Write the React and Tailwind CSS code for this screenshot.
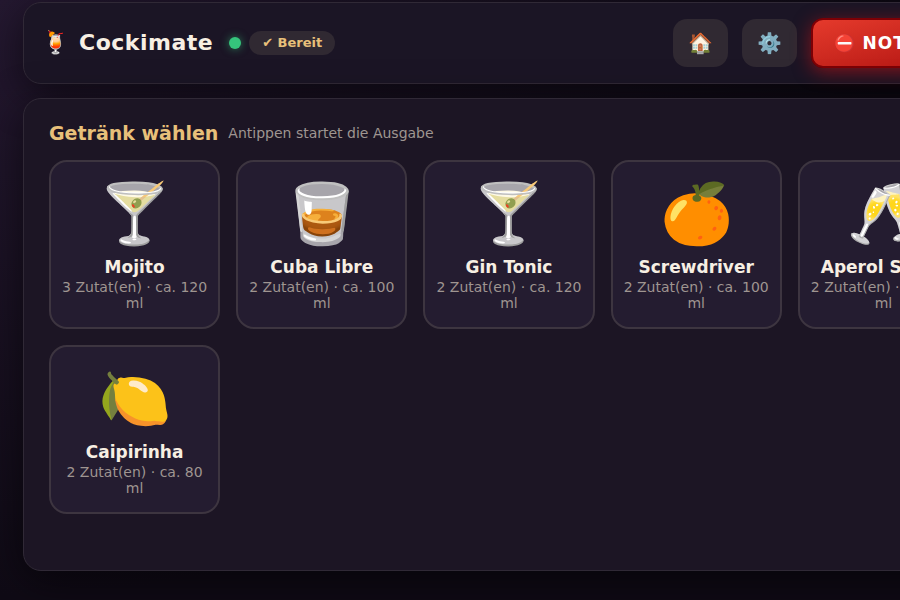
import { useState } from "react";

const drinks = [
  { id: 1, name: "Mojito", icon: "🍸", parts: 3, ml: 120 },
  { id: 2, name: "Cuba Libre", icon: "🥃", parts: 2, ml: 100 },
  { id: 3, name: "Gin Tonic", icon: "🍸", parts: 2, ml: 120 },
  { id: 4, name: "Screwdriver", icon: "🍊", parts: 2, ml: 100 },
  { id: 5, name: "Aperol Spritz", icon: "🥂", parts: 2, ml: 120 },
  { id: 6, name: "Caipirinha", icon: "🍋", parts: 2, ml: 80 },
];

function IconButton({ label, children }) {
  return (
    <button type="button" aria-label={label}
      className="flex h-12 w-[55px] items-center justify-center rounded-[14px] bg-[#302932] text-[20px] leading-6">
      {children}
    </button>
  );
}

function DrinkCard({ drink, onSelect }) {
  return (
    <button type="button" onClick={() => onSelect(drink.id)}
      className="flex min-h-[169px] flex-col items-center justify-center rounded-[18px] border-2 border-[#3d3540] bg-[#241c30] px-2.5 py-3 text-center">
      <span className="text-[59px] leading-[70px]">{drink.icon}</span>
      <span className="mt-2 text-[17px] font-bold leading-5 text-[#f7efe3]">{drink.name}</span>
      <span className="mt-0.5 text-[14px] leading-4 text-[#9f9591]">
        {drink.parts} Zutat(en) · ca. {drink.ml} ml
      </span>
    </button>
  );
}

export default function App() {
  const [, setSelected] = useState(null);

  return (
    <div className="min-h-screen overflow-x-hidden bg-[#0f0a15] bg-[radial-gradient(ellipse_at_top_left,#241830_0%,#0f0a15_70%)] font-['DejaVu_Sans',sans-serif] text-[#f7efe3]">
      <div className="flex min-h-screen min-w-[1018px] flex-col gap-3.5 px-[23px] pt-0.5 pb-[29px]">
        {/* Header */}
        <header className="flex items-center justify-between rounded-[18px] border border-[#302936] bg-[#1b1525] px-[18px] py-[15px] shadow-[0_10px_40px_rgba(0,0,0,0.55)]">
          <div className="flex items-center">
            <span className="text-[22px] leading-8">🍹</span>
            <h1 className="ml-2.5 text-[22px] font-bold leading-8 tracking-[0.5px]">Cockimate</h1>
            <span className="ml-4 size-3 rounded-full bg-[#35c47c] shadow-[0_0_8px_rgba(53,196,124,0.6)]" />
            <span className="ml-2 rounded-full bg-[#302932] px-[13px] py-1 text-[13px] font-bold leading-4 text-[#e8c07a]">
              ✔ Bereit
            </span>
          </div>
          <div className="flex items-center gap-3.5">
            <IconButton label="Startseite">🏠</IconButton>
            <IconButton label="Einstellungen">⚙️</IconButton>
            <button type="button"
              className="h-[50px] whitespace-nowrap rounded-xl border-2 border-[#7d0005] bg-linear-to-br from-[#e53a2c] to-[#b01010] px-[21px] text-[17px] font-bold leading-6 tracking-[1px] text-white shadow-[0_4px_18px_rgba(229,20,20,0.5)]">
              ⛔ NOT-AUS
            </button>
          </div>
        </header>

        {/* Drinks */}
        <main className="flex-1 rounded-[18px] border border-[#302936] bg-[#1c1524] px-[25px] pt-[22px] pb-6 shadow-[0_10px_40px_rgba(0,0,0,0.55)]">
          <div className="mb-[15px] flex items-center gap-2.5">
            <h2 className="text-[19px] font-bold leading-6 text-[#e8c07a]">Getränk wählen</h2>
            <p className="text-[14px] leading-6 text-[#9f9591]">Antippen startet die Ausgabe</p>
          </div>
          <div className="grid grid-cols-5 gap-4">
            {drinks.map((drink) => (
              <DrinkCard key={drink.id} drink={drink} onSelect={setSelected} />
            ))}
          </div>
        </main>
      </div>
    </div>
  );
}
